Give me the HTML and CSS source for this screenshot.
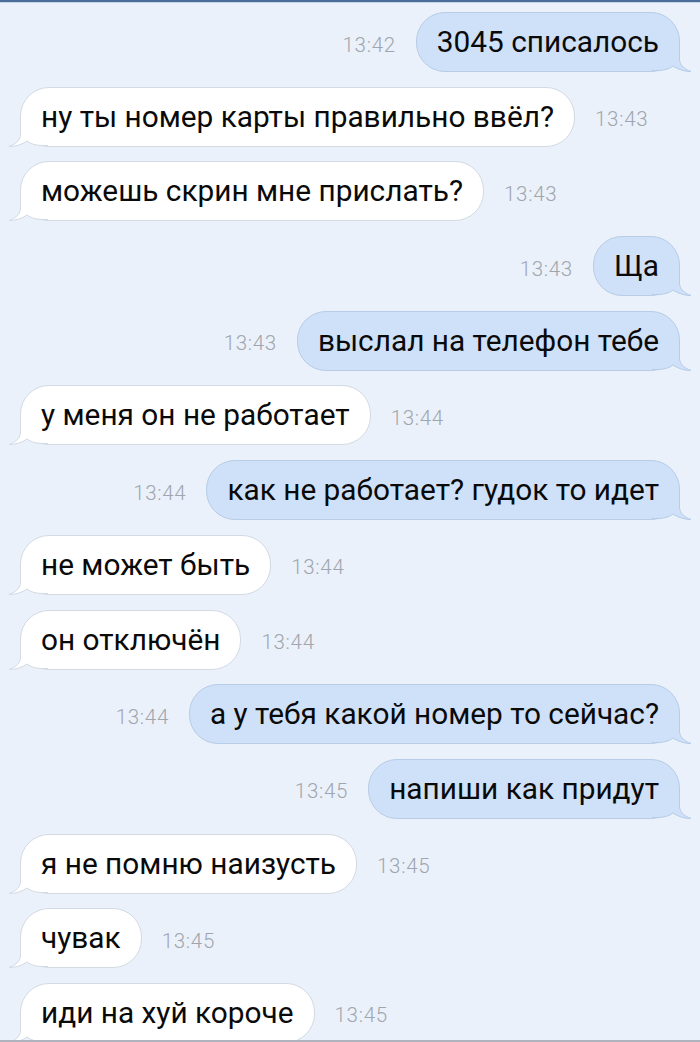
FILE: index.html
```html
<!DOCTYPE html>
<html lang="ru">
<head>
<meta charset="utf-8">
<title>Чат</title>
<link rel="stylesheet" href="styles.css">
</head>
<body>
<div class="topbar"></div>
<div class="chat">
  <div class="row out"><span class="time">13:42</span><div class="bubble"><svg class="tail" viewBox="0 0 40 31" width="40" height="31"><path class="tf" d="M12.5,0 L12.5,18 C12.5,24 8,28 1,30.5 C8,30.5 14,28.5 19,25 C23,28 28,29.5 34,29.5 L40,29.5 L40,0 Z"/><path class="ts" d="M12.5,0 L12.5,18 C12.5,24 8,28 1,30.5 C8,30.5 14,28.5 19,25 C23,28 28,29.5 34,29.5 L40,29.5"/></svg><span class="txt">3045 списалось</span></div></div>
  <div class="row in"><div class="bubble"><svg class="tail" viewBox="0 0 40 31" width="40" height="31"><path class="tf" d="M12.5,0 L12.5,18 C12.5,24 8,28 1,30.5 C8,30.5 14,28.5 19,25 C23,28 28,29.5 34,29.5 L40,29.5 L40,0 Z"/><path class="ts" d="M12.5,0 L12.5,18 C12.5,24 8,28 1,30.5 C8,30.5 14,28.5 19,25 C23,28 28,29.5 34,29.5 L40,29.5"/></svg><span class="txt">ну ты номер карты правильно ввёл?</span></div><span class="time">13:43</span></div>
  <div class="row in"><div class="bubble"><svg class="tail" viewBox="0 0 40 31" width="40" height="31"><path class="tf" d="M12.5,0 L12.5,18 C12.5,24 8,28 1,30.5 C8,30.5 14,28.5 19,25 C23,28 28,29.5 34,29.5 L40,29.5 L40,0 Z"/><path class="ts" d="M12.5,0 L12.5,18 C12.5,24 8,28 1,30.5 C8,30.5 14,28.5 19,25 C23,28 28,29.5 34,29.5 L40,29.5"/></svg><span class="txt">можешь скрин мне прислать?</span></div><span class="time">13:43</span></div>
  <div class="row out"><span class="time">13:43</span><div class="bubble"><svg class="tail" viewBox="0 0 40 31" width="40" height="31"><path class="tf" d="M12.5,0 L12.5,18 C12.5,24 8,28 1,30.5 C8,30.5 14,28.5 19,25 C23,28 28,29.5 34,29.5 L40,29.5 L40,0 Z"/><path class="ts" d="M12.5,0 L12.5,18 C12.5,24 8,28 1,30.5 C8,30.5 14,28.5 19,25 C23,28 28,29.5 34,29.5 L40,29.5"/></svg><span class="txt">Ща</span></div></div>
  <div class="row out"><span class="time">13:43</span><div class="bubble"><svg class="tail" viewBox="0 0 40 31" width="40" height="31"><path class="tf" d="M12.5,0 L12.5,18 C12.5,24 8,28 1,30.5 C8,30.5 14,28.5 19,25 C23,28 28,29.5 34,29.5 L40,29.5 L40,0 Z"/><path class="ts" d="M12.5,0 L12.5,18 C12.5,24 8,28 1,30.5 C8,30.5 14,28.5 19,25 C23,28 28,29.5 34,29.5 L40,29.5"/></svg><span class="txt">выслал на телефон тебе</span></div></div>
  <div class="row in"><div class="bubble"><svg class="tail" viewBox="0 0 40 31" width="40" height="31"><path class="tf" d="M12.5,0 L12.5,18 C12.5,24 8,28 1,30.5 C8,30.5 14,28.5 19,25 C23,28 28,29.5 34,29.5 L40,29.5 L40,0 Z"/><path class="ts" d="M12.5,0 L12.5,18 C12.5,24 8,28 1,30.5 C8,30.5 14,28.5 19,25 C23,28 28,29.5 34,29.5 L40,29.5"/></svg><span class="txt">у меня он не работает</span></div><span class="time">13:44</span></div>
  <div class="row out"><span class="time">13:44</span><div class="bubble"><svg class="tail" viewBox="0 0 40 31" width="40" height="31"><path class="tf" d="M12.5,0 L12.5,18 C12.5,24 8,28 1,30.5 C8,30.5 14,28.5 19,25 C23,28 28,29.5 34,29.5 L40,29.5 L40,0 Z"/><path class="ts" d="M12.5,0 L12.5,18 C12.5,24 8,28 1,30.5 C8,30.5 14,28.5 19,25 C23,28 28,29.5 34,29.5 L40,29.5"/></svg><span class="txt">как не работает? гудок то идет</span></div></div>
  <div class="row in"><div class="bubble"><svg class="tail" viewBox="0 0 40 31" width="40" height="31"><path class="tf" d="M12.5,0 L12.5,18 C12.5,24 8,28 1,30.5 C8,30.5 14,28.5 19,25 C23,28 28,29.5 34,29.5 L40,29.5 L40,0 Z"/><path class="ts" d="M12.5,0 L12.5,18 C12.5,24 8,28 1,30.5 C8,30.5 14,28.5 19,25 C23,28 28,29.5 34,29.5 L40,29.5"/></svg><span class="txt">не может быть</span></div><span class="time">13:44</span></div>
  <div class="row in"><div class="bubble"><svg class="tail" viewBox="0 0 40 31" width="40" height="31"><path class="tf" d="M12.5,0 L12.5,18 C12.5,24 8,28 1,30.5 C8,30.5 14,28.5 19,25 C23,28 28,29.5 34,29.5 L40,29.5 L40,0 Z"/><path class="ts" d="M12.5,0 L12.5,18 C12.5,24 8,28 1,30.5 C8,30.5 14,28.5 19,25 C23,28 28,29.5 34,29.5 L40,29.5"/></svg><span class="txt">он отключён</span></div><span class="time">13:44</span></div>
  <div class="row out"><span class="time">13:44</span><div class="bubble"><svg class="tail" viewBox="0 0 40 31" width="40" height="31"><path class="tf" d="M12.5,0 L12.5,18 C12.5,24 8,28 1,30.5 C8,30.5 14,28.5 19,25 C23,28 28,29.5 34,29.5 L40,29.5 L40,0 Z"/><path class="ts" d="M12.5,0 L12.5,18 C12.5,24 8,28 1,30.5 C8,30.5 14,28.5 19,25 C23,28 28,29.5 34,29.5 L40,29.5"/></svg><span class="txt">а у тебя какой номер то сейчас?</span></div></div>
  <div class="row out"><span class="time">13:45</span><div class="bubble"><svg class="tail" viewBox="0 0 40 31" width="40" height="31"><path class="tf" d="M12.5,0 L12.5,18 C12.5,24 8,28 1,30.5 C8,30.5 14,28.5 19,25 C23,28 28,29.5 34,29.5 L40,29.5 L40,0 Z"/><path class="ts" d="M12.5,0 L12.5,18 C12.5,24 8,28 1,30.5 C8,30.5 14,28.5 19,25 C23,28 28,29.5 34,29.5 L40,29.5"/></svg><span class="txt">напиши как придут</span></div></div>
  <div class="row in"><div class="bubble"><svg class="tail" viewBox="0 0 40 31" width="40" height="31"><path class="tf" d="M12.5,0 L12.5,18 C12.5,24 8,28 1,30.5 C8,30.5 14,28.5 19,25 C23,28 28,29.5 34,29.5 L40,29.5 L40,0 Z"/><path class="ts" d="M12.5,0 L12.5,18 C12.5,24 8,28 1,30.5 C8,30.5 14,28.5 19,25 C23,28 28,29.5 34,29.5 L40,29.5"/></svg><span class="txt">я не помню наизусть</span></div><span class="time">13:45</span></div>
  <div class="row in"><div class="bubble"><svg class="tail" viewBox="0 0 40 31" width="40" height="31"><path class="tf" d="M12.5,0 L12.5,18 C12.5,24 8,28 1,30.5 C8,30.5 14,28.5 19,25 C23,28 28,29.5 34,29.5 L40,29.5 L40,0 Z"/><path class="ts" d="M12.5,0 L12.5,18 C12.5,24 8,28 1,30.5 C8,30.5 14,28.5 19,25 C23,28 28,29.5 34,29.5 L40,29.5"/></svg><span class="txt">чувак</span></div><span class="time">13:45</span></div>
  <div class="row in"><div class="bubble"><svg class="tail" viewBox="0 0 40 31" width="40" height="31"><path class="tf" d="M12.5,0 L12.5,18 C12.5,24 8,28 1,30.5 C8,30.5 14,28.5 19,25 C23,28 28,29.5 34,29.5 L40,29.5 L40,0 Z"/><path class="ts" d="M12.5,0 L12.5,18 C12.5,24 8,28 1,30.5 C8,30.5 14,28.5 19,25 C23,28 28,29.5 34,29.5 L40,29.5"/></svg><span class="txt">иди на хуй короче</span></div><span class="time">13:45</span></div>
</div>
<div class="bottombar"></div>
</body>
</html>
```

FILE: styles.css
```css
html, body {
  margin: 0;
  padding: 0;
}
body {
  width: 700px;
  height: 1042px;
  overflow: hidden;
  background: #ebf1fa;
  font-family: Roboto, "Liberation Sans", sans-serif;
  position: relative;
}
.topbar {
  height: 2px;
  background: #4c6e9b;
  border-bottom: 1px solid #c5d3e6;
}
.chat {
  display: flex;
  flex-direction: column;
  gap: 14.7px;
  padding-top: 9px;
}
.row {
  display: flex;
  align-items: center;
  gap: 20px;
}
.row.in {
  justify-content: flex-start;
  padding-left: 20px;
}
.row.out {
  justify-content: flex-end;
  padding-right: 20px;
}
.time {
  font-size: 20.5px;
  font-weight: 300;
  letter-spacing: 0.7px;
  color: #a0a6ae;
  padding-top: 5px;
}
.bubble {
  position: relative;
  height: 60px;
  box-sizing: border-box;
  display: flex;
  align-items: center;
  padding: 0 20px;
  border: 1px solid #d3dae4;
  border-radius: 29px;
  background: #ffffff;
  font-size: 29.8px;
  color: #0a0a0a;
  white-space: nowrap;
}
.row.out .bubble {
  background: #cfe1f8;
  border-color: #b7cce7;
}
.tail {
  position: absolute;
  left: -13px;
  bottom: -1px;
  overflow: visible;
}
.row.out .tail {
  left: auto;
  right: -13px;
  transform: scaleX(-1);
}
.tail .tf {
  fill: #ffffff;
}
.tail .ts {
  fill: none;
  stroke: #d3dae4;
  stroke-width: 1;
}
.row.out .tail .tf {
  fill: #cfe1f8;
}
.row.out .tail .ts {
  stroke: #b7cce7;
}
.txt {
  position: relative;
  padding-bottom: 1px;
}
.bottombar {
  position: absolute;
  left: 0;
  right: 0;
  bottom: 0;
  height: 2px;
  background: #aeb3bd;
}
```
